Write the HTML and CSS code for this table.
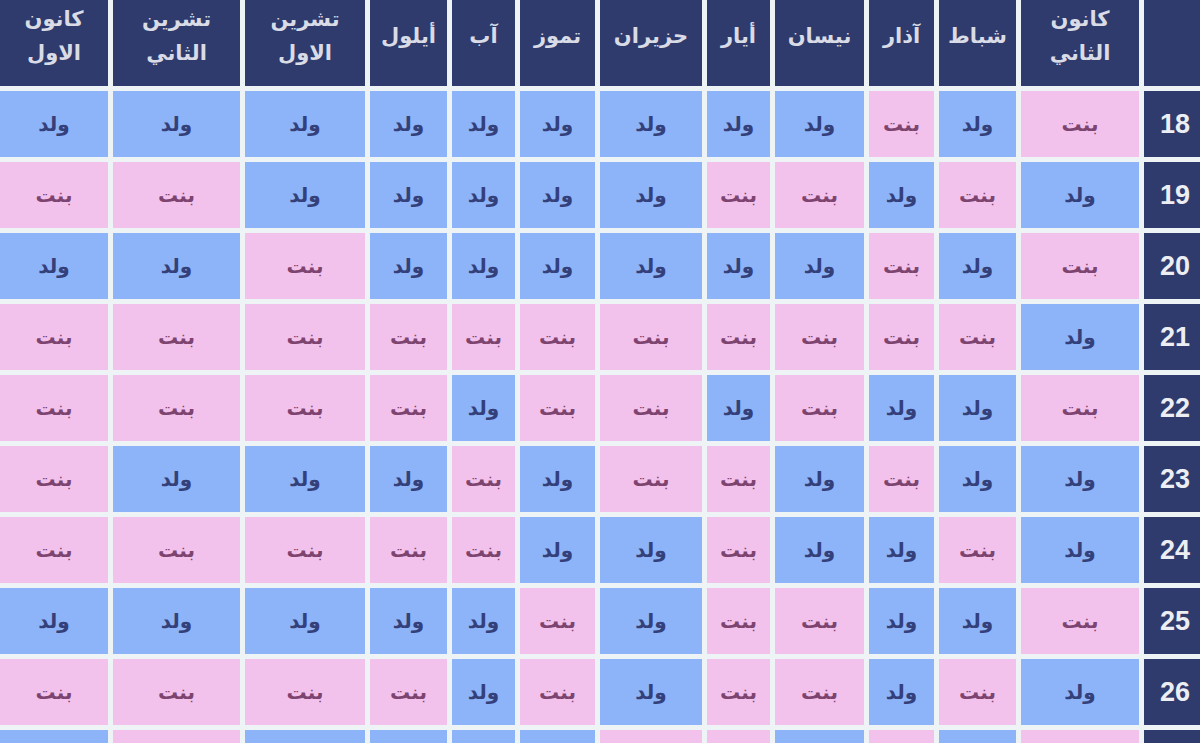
FILE: index.html
```html
<!DOCTYPE html>
<html lang="ar" dir="rtl">
<head>
<meta charset="utf-8">
<title>جدول الحمل</title>
<link rel="stylesheet" href="styles.css">
</head>
<body>
<div class="chart">
  <div class="h"></div>
  <div class="h">كانون<br>الثاني</div>
  <div class="h">شباط</div>
  <div class="h">آذار</div>
  <div class="h">نيسان</div>
  <div class="h">أيار</div>
  <div class="h">حزيران</div>
  <div class="h">تموز</div>
  <div class="h">آب</div>
  <div class="h">أيلول</div>
  <div class="h">تشرين<br>الاول</div>
  <div class="h">تشرين<br>الثاني</div>
  <div class="h">كانون<br>الاول</div>

  <div class="n">18</div>
  <div class="g">بنت</div><div class="b">ولد</div><div class="g">بنت</div><div class="b">ولد</div><div class="b">ولد</div><div class="b">ولد</div><div class="b">ولد</div><div class="b">ولد</div><div class="b">ولد</div><div class="b">ولد</div><div class="b">ولد</div><div class="b">ولد</div>

  <div class="n">19</div>
  <div class="b">ولد</div><div class="g">بنت</div><div class="b">ولد</div><div class="g">بنت</div><div class="g">بنت</div><div class="b">ولد</div><div class="b">ولد</div><div class="b">ولد</div><div class="b">ولد</div><div class="b">ولد</div><div class="g">بنت</div><div class="g">بنت</div>

  <div class="n">20</div>
  <div class="g">بنت</div><div class="b">ولد</div><div class="g">بنت</div><div class="b">ولد</div><div class="b">ولد</div><div class="b">ولد</div><div class="b">ولد</div><div class="b">ولد</div><div class="b">ولد</div><div class="g">بنت</div><div class="b">ولد</div><div class="b">ولد</div>

  <div class="n">21</div>
  <div class="b">ولد</div><div class="g">بنت</div><div class="g">بنت</div><div class="g">بنت</div><div class="g">بنت</div><div class="g">بنت</div><div class="g">بنت</div><div class="g">بنت</div><div class="g">بنت</div><div class="g">بنت</div><div class="g">بنت</div><div class="g">بنت</div>

  <div class="n">22</div>
  <div class="g">بنت</div><div class="b">ولد</div><div class="b">ولد</div><div class="g">بنت</div><div class="b">ولد</div><div class="g">بنت</div><div class="g">بنت</div><div class="b">ولد</div><div class="g">بنت</div><div class="g">بنت</div><div class="g">بنت</div><div class="g">بنت</div>

  <div class="n">23</div>
  <div class="b">ولد</div><div class="b">ولد</div><div class="g">بنت</div><div class="b">ولد</div><div class="g">بنت</div><div class="g">بنت</div><div class="b">ولد</div><div class="g">بنت</div><div class="b">ولد</div><div class="b">ولد</div><div class="b">ولد</div><div class="g">بنت</div>

  <div class="n">24</div>
  <div class="b">ولد</div><div class="g">بنت</div><div class="b">ولد</div><div class="b">ولد</div><div class="g">بنت</div><div class="b">ولد</div><div class="b">ولد</div><div class="g">بنت</div><div class="g">بنت</div><div class="g">بنت</div><div class="g">بنت</div><div class="g">بنت</div>

  <div class="n">25</div>
  <div class="g">بنت</div><div class="b">ولد</div><div class="b">ولد</div><div class="g">بنت</div><div class="g">بنت</div><div class="b">ولد</div><div class="g">بنت</div><div class="b">ولد</div><div class="b">ولد</div><div class="b">ولد</div><div class="b">ولد</div><div class="b">ولد</div>

  <div class="n">26</div>
  <div class="b">ولد</div><div class="g">بنت</div><div class="b">ولد</div><div class="g">بنت</div><div class="g">بنت</div><div class="b">ولد</div><div class="g">بنت</div><div class="b">ولد</div><div class="g">بنت</div><div class="g">بنت</div><div class="g">بنت</div><div class="g">بنت</div>

  <div class="n"></div>
  <div class="g"></div><div class="b"></div><div class="g"></div><div class="b"></div><div class="g"></div><div class="g"></div><div class="b"></div><div class="b"></div><div class="b"></div><div class="b"></div><div class="g"></div><div class="b"></div>
</div>
</body>
</html>
```

FILE: styles.css
```css
html, body {
  margin: 0;
  padding: 0;
  background: #eef3f6;
  overflow: hidden;
}

body {
  width: 1200px;
  height: 743px;
}

.chart {
  direction: rtl;
  display: grid;
  grid-template-columns: 56px 118px 77px 65px 89px 63px 102px 75px 63px 77px 120px 127px 108px;
  grid-template-rows: 86px;
  grid-auto-rows: 66px;
  gap: 5px;
  width: 1200px;
  font-family: "DejaVu Sans", "Noto Sans", sans-serif;
}

.h {
  background: #2f3b6c;
  color: #d9dce6;
  font-weight: bold;
  font-size: 21px;
  line-height: 34px;
  display: flex;
  align-items: center;
  justify-content: center;
  text-align: center;
  padding-bottom: 14px;
  box-sizing: border-box;
}

.n {
  background: #2f3b6c;
  color: #eceef3;
  font-family: "Liberation Sans", Arial, sans-serif;
  font-weight: bold;
  font-size: 27px;
  display: flex;
  align-items: center;
  justify-content: center;
  padding-left: 6px;
}

.b, .g {
  display: flex;
  align-items: center;
  justify-content: center;
  font-weight: bold;
  font-size: 20px;
}

.b {
  background: #8db4f8;
  color: #34407a;
}

.g {
  background: #f3c2ec;
  color: #7d4470;
}
```
